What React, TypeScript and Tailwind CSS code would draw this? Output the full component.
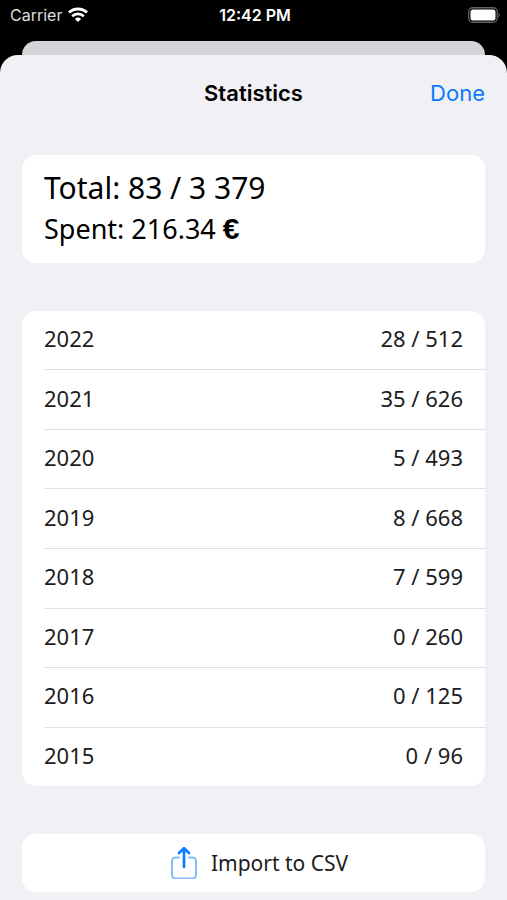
const years = [
  { year: 2022, count: "28 / 512" },
  { year: 2021, count: "35 / 626" },
  { year: 2020, count: "5 / 493" },
  { year: 2019, count: "8 / 668" },
  { year: 2018, count: "7 / 599" },
  { year: 2017, count: "0 / 260" },
  { year: 2016, count: "0 / 125" },
  { year: 2015, count: "0 / 96" },
];

function WifiIcon() {
  return (
    <svg className="h-4 w-5" viewBox="0 0 20 16" fill="none" stroke="white" aria-hidden="true">
      <path d="M1 5.6a13 13 0 0 1 18 0" strokeWidth="2.8" />
      <path d="M4.2 9.2a8.3 8.3 0 0 1 11.6 0" strokeWidth="2.6" />
      <path d="M10 15 6.9 11.9a4.4 4.4 0 0 1 6.2 0Z" fill="white" stroke="none" />
    </svg>
  );
}

function BatteryIcon() {
  return (
    <svg className="h-4 w-8" viewBox="0 0 32 16" fill="none" aria-hidden="true">
      <rect x="0.75" y="0.75" width="28.5" height="14.5" rx="4" stroke="#636363" strokeWidth="1.3" />
      <rect x="2.5" y="2.5" width="25" height="11" rx="2.5" fill="white" />
      <path d="M30.5 5.5c1.6.7 1.6 4.3 0 5Z" fill="#636363" />
    </svg>
  );
}

function ShareIcon() {
  return (
    <svg className="h-8 w-[26px]" viewBox="0 0 26 32" fill="none" strokeLinecap="round" strokeLinejoin="round" aria-hidden="true">
      <path d="M8 10.5H4.5A3.5 3.5 0 0 0 1 14v14a3.5 3.5 0 0 0 3.5 3.5h17A3.5 3.5 0 0 0 25 28V14a3.5 3.5 0 0 0-3.5-3.5H18" stroke="#86bcfc" strokeWidth="2" />
      <path d="M13 20V1.5M8 6l5-4.8L18 6" stroke="#0a7aff" strokeWidth="2.6" />
    </svg>
  );
}

export default function App() {
  return (
    <div className="flex min-h-screen flex-col bg-black font-['Inter',sans-serif] text-black">
      <header className="grid h-[41px] grid-cols-3 items-start pt-[5px] pr-[7px] pl-[10px] text-base leading-5 text-white">
        <div className="flex items-center gap-[6px] text-[#dedede]">
          <span>Carrier</span>
          <WifiIcon />
        </div>
        <time className="text-center font-semibold">12:42 PM</time>
        <div className="flex h-5 items-center justify-end">
          <BatteryIcon />
        </div>
      </header>

      <div className="mx-[22px] h-[14px] rounded-t-[14px] bg-[#d4d4d8]" />

      <main className="flex-1 rounded-t-[18px] bg-[#f1f0f5] px-[22px] pb-[7px]">
        <div className="grid h-[76px] grid-cols-[1fr_auto_1fr] items-center">
          <h1 className="col-start-2 text-[22px] leading-7 font-semibold">Statistics</h1>
          <button type="button" className="justify-self-end text-[22px] leading-7 text-[#0a7aff]">
            Done
          </button>
        </div>

        <div className="flex flex-col gap-12 pt-6 font-['Noto_Sans',sans-serif]">
          <section className="rounded-[14px] bg-white px-[22px] pt-3 pb-[14px]">
            <p className="text-[30px] leading-[42px]">Total: 83 / 3 379</p>
            <p className="text-[27px] leading-10">
              Spent: 216.34 <span className="font-['Liberation_Sans',sans-serif] text-[30px] font-bold">€</span>
            </p>
          </section>

          <section className="rounded-[14px] bg-white pl-[22px]">
            <table className="h-[475px] w-full border-collapse text-[22px] leading-8 text-[#1c1c1e]">
              <tbody>
                {years.map(({ year, count }) => (
                  <tr key={year} className="border-b border-[#dfdfe1] last:border-b-0">
                    <th scope="row" className="px-0 pt-0 pb-1 text-left font-normal">{year}</th>
                    <td className="pt-0 pr-[22px] pb-1 pl-0 text-right">{count}</td>
                  </tr>
                ))}
              </tbody>
            </table>
          </section>

          <button
            type="button"
            className="flex items-center justify-center gap-[14px] rounded-[14px] bg-white py-[13px] pl-3 text-[21px] leading-8 text-[#1c1c1e]"
          >
            <ShareIcon />
            Import to CSV
          </button>
        </div>
      </main>
    </div>
  );
}
